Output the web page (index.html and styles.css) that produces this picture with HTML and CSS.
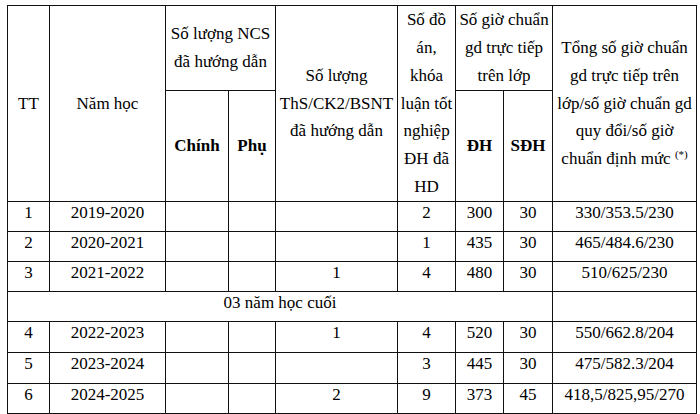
FILE: index.html
```html
<!DOCTYPE html>
<html lang="vi">
<head>
<meta charset="utf-8">
<link rel="stylesheet" href="styles.css">
</head>
<body>
<table class="grid">
  <colgroup>
    <col class="c-tt"><col class="c-year"><col class="c-main"><col class="c-sub"><col class="c-ths"><col class="c-doan"><col class="c-dh"><col class="c-sdh"><col class="c-total">
  </colgroup>
  <thead>
    <tr class="h1">
      <th rowspan="2">TT</th>
      <th rowspan="2">Năm học</th>
      <th colspan="2">Số lượng NCS<br>đã hướng dẫn</th>
      <th rowspan="2">Số lượng<br>ThS/CK2/BSNT<br>đã hướng dẫn</th>
      <th rowspan="2">Số đồ<br>án,<br>khóa<br>luận tốt<br>nghiệp<br>ĐH đã<br>HD</th>
      <th colspan="2">Số giờ chuẩn<br>gd trực tiếp<br>trên lớp</th>
      <th rowspan="2">Tổng số giờ chuẩn<br>gd trực tiếp trên<br>lớp/số giờ chuẩn gd<br>quy đổi/số giờ<br>chuẩn định mức <sup class="note">(*)</sup></th>
    </tr>
    <tr class="h2">
      <th class="b">Chính</th>
      <th class="b">Phụ</th>
      <th class="b">ĐH</th>
      <th class="b">SĐH</th>
    </tr>
  </thead>
  <tbody>
    <tr class="r30"><td>1</td><td>2019-2020</td><td></td><td></td><td></td><td>2</td><td>300</td><td>30</td><td>330/353.5/230</td></tr>
    <tr class="r30"><td>2</td><td>2020-2021</td><td></td><td></td><td></td><td>1</td><td>435</td><td>30</td><td>465/484.6/230</td></tr>
    <tr class="r30"><td>3</td><td>2021-2022</td><td></td><td></td><td>1</td><td>4</td><td>480</td><td>30</td><td>510/625/230</td></tr>
    <tr class="r30"><td colspan="8">03 năm học cuối</td><td></td></tr>
    <tr class="r31"><td>4</td><td>2022-2023</td><td></td><td></td><td>1</td><td>4</td><td>520</td><td>30</td><td>550/662.8/204</td></tr>
    <tr class="r31"><td>5</td><td>2023-2024</td><td></td><td></td><td></td><td>3</td><td>445</td><td>30</td><td>475/582.3/204</td></tr>
    <tr class="r30"><td>6</td><td>2024-2025</td><td></td><td></td><td>2</td><td>9</td><td>373</td><td>45</td><td>418,5/825,95/270</td></tr>
  </tbody>
</table>
</body>
</html>
```

FILE: styles.css
```css
html, body {
  margin: 0;
  padding: 0;
  background: #fff;
}

body {
  padding: 5px 0 0 7px;
  font-family: "Liberation Serif", "Times New Roman", serif;
  font-size: 17px;
  color: #000;
}

.grid {
  border-collapse: collapse;
  table-layout: fixed;
  width: 689px;
}

.c-tt { width: 42px; }
.c-year { width: 116px; }
.c-main { width: 63px; }
.c-sub { width: 47px; }
.c-ths { width: 122px; }
.c-doan { width: 58px; }
.c-dh { width: 48px; }
.c-sdh { width: 49px; }
.c-total { width: 144px; }

.grid th,
.grid td {
  border: 1px solid #111;
  padding: 0;
  text-align: center;
  white-space: nowrap;
  overflow: visible;
}

.grid th {
  font-weight: normal;
  vertical-align: middle;
  line-height: 27.8px;
}

.grid th.b {
  font-weight: bold;
}

.h1 { height: 85px; }
.h2 { height: 111px; }

.grid td {
  vertical-align: top;
  line-height: 21px;
}

.r30 { height: 30px; }
.r31 { height: 31px; }

.note {
  font-size: 11px;
  line-height: 0;
  vertical-align: 6px;
}
```
